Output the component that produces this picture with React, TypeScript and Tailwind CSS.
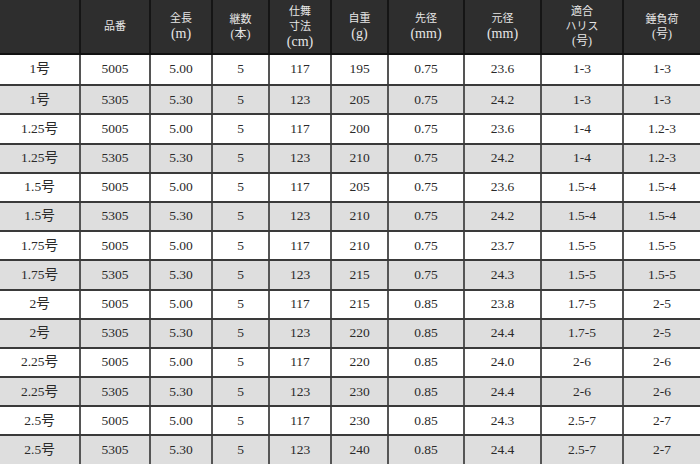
import type { ReactNode } from "react";

const cols = "grid-cols-[79px_70px_62px_57px_62px_57px_76px_77px_82px_78px]";

function P({ children, small }: { children: ReactNode; small?: boolean }) {
  return <span className={small ? "text-[12px]" : "text-[14px]"}>{children}</span>;
}

const headers: ReactNode[] = [
  "",
  "品番",
  <>全長<br /><P>(m)</P></>,
  <>継数<br /><P small>(本)</P></>,
  <>仕舞<br />寸法<br /><P>(cm)</P></>,
  <>自重<br /><P>(g)</P></>,
  <>先径<br /><P>(mm)</P></>,
  <>元径<br /><P>(mm)</P></>,
  <>適合<br />ハリス<br /><P small>(号)</P></>,
  <>錘負荷<br /><P small>(号)</P></>,
];

const rows: string[][] = [
  ["1号", "5005", "5.00", "5", "117", "195", "0.75", "23.6", "1-3", "1-3"],
  ["1号", "5305", "5.30", "5", "123", "205", "0.75", "24.2", "1-3", "1-3"],
  ["1.25号", "5005", "5.00", "5", "117", "200", "0.75", "23.6", "1-4", "1.2-3"],
  ["1.25号", "5305", "5.30", "5", "123", "210", "0.75", "24.2", "1-4", "1.2-3"],
  ["1.5号", "5005", "5.00", "5", "117", "205", "0.75", "23.6", "1.5-4", "1.5-4"],
  ["1.5号", "5305", "5.30", "5", "123", "210", "0.75", "24.2", "1.5-4", "1.5-4"],
  ["1.75号", "5005", "5.00", "5", "117", "210", "0.75", "23.7", "1.5-5", "1.5-5"],
  ["1.75号", "5305", "5.30", "5", "123", "215", "0.75", "24.3", "1.5-5", "1.5-5"],
  ["2号", "5005", "5.00", "5", "117", "215", "0.85", "23.8", "1.7-5", "2-5"],
  ["2号", "5305", "5.30", "5", "123", "220", "0.85", "24.4", "1.7-5", "2-5"],
  ["2.25号", "5005", "5.00", "5", "117", "220", "0.85", "24.0", "2-6", "2-6"],
  ["2.25号", "5305", "5.30", "5", "123", "230", "0.85", "24.4", "2-6", "2-6"],
  ["2.5号", "5005", "5.00", "5", "117", "230", "0.85", "24.3", "2.5-7", "2-7"],
  ["2.5号", "5305", "5.30", "5", "123", "240", "0.85", "24.4", "2.5-7", "2-7"],
];

export default function App() {
  return (
    <div className="w-[700px] h-[464px] overflow-hidden bg-white font-['Liberation_Serif','Noto_Sans_CJK_JP',serif]">
      {/* header */}
      <div className={`grid ${cols} h-[55px] bg-[#2e2e2e] border-b-2 border-[#111]`}>
        {headers.map((h, i) => (
          <div
            key={i}
            className={`flex items-center justify-center text-center text-[11px] leading-[15px] text-[#e6e6e6] ${
              i > 0 ? "border-l-2 border-[#151515]" : ""
            }`}
          >
            <span>{h}</span>
          </div>
        ))}
      </div>

      {/* body */}
      {rows.map((r, ri) => (
        <div
          key={ri}
          className={`grid ${cols} h-[29.2px] ${ri > 0 ? "border-t-2 border-[#3a3a3a]" : ""} ${
            ri % 2 === 1 ? "bg-[#dedede]" : "bg-white"
          }`}
        >
          {r.map((c, ci) => (
            <div
              key={ci}
              className={`flex items-center justify-center text-[13.5px] text-[#2a2a2a] ${
                ci > 0 ? "border-l-2 border-[#555]" : ""
              }`}
            >
              {c}
            </div>
          ))}
        </div>
      ))}
    </div>
  );
}
